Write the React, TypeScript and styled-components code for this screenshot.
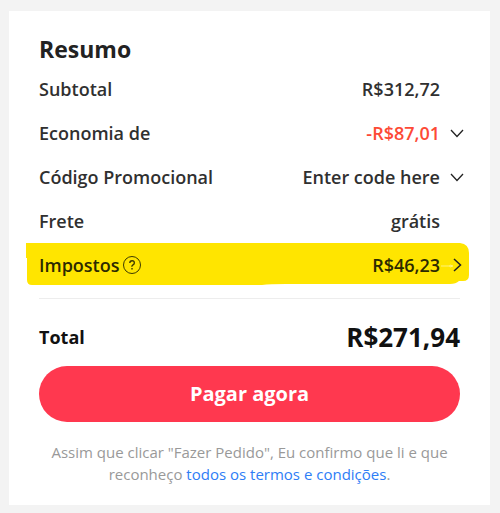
import React from "react";
import styled, { createGlobalStyle } from "styled-components";

const GlobalStyle = createGlobalStyle`
  *, *::before, *::after { box-sizing: border-box; }
  body {
    margin: 0;
    background: #f3f3f3;
    color: #222;
    font-family: "Open Sans", "Noto Sans", sans-serif;
  }
  button { font: inherit; color: inherit; }
`;

const Page = styled.main`
  padding: 11px 10px 8px 9px;
`;

const Card = styled.section`
  padding: 22px 30px 20px;
  background: #fff;
`;

const Title = styled.h1`
  margin: 0 0 2px;
  font-size: 23px;
  line-height: 32px;
  font-weight: 700;
`;

const Rows = styled.dl`
  margin: 0;
`;

const Row = styled.div<{ $marked?: boolean }>`
  position: relative;
  display: flex;
  align-items: center;
  height: 44px;
  color: ${(p) => (p.$marked ? "#2c2a00" : "#303030")};
  font-size: 18px;
  line-height: 24px;
  font-weight: 600;
`;

const Label = styled.dt`
  position: relative;
  display: flex;
  align-items: center;
  gap: 2px;
  flex: 1;
`;

const Value = styled.dd<{ $discount?: boolean }>`
  position: relative;
  display: flex;
  align-items: center;
  margin: 0;
  padding-right: 20px;
  color: ${(p) => (p.$discount ? "#fd4a36" : "inherit")};

  &:has(button) { padding-right: 0; }
`;

const IconButton = styled.button`
  display: flex;
  align-items: center;
  padding: 0;
  border: 0;
  background: none;
  color: #222;
  cursor: pointer;
`;

const Chevron = styled.svg`
  width: 20px;
  height: 20px;
  overflow: visible;
  fill: none;
  stroke: currentColor;
`;

const Help = styled.svg`
  width: 20px;
  height: 20px;
  fill: none;
  stroke: #3d3a00;
`;

const Marker = styled.svg`
  position: absolute;
  top: 0;
  left: -13px;
  width: calc(100% + 22px);
  height: 42px;
  fill: #ffe500;
`;

const Divider = styled.hr`
  height: 1px;
  margin: 11px 0 19px;
  border: 0;
  background: #ededed;
`;

const TotalRow = styled.div`
  display: flex;
  align-items: center;
  justify-content: space-between;
  height: 38px;
  font-size: 18px;
  font-weight: 700;
  color: #111;
`;

const TotalValue = styled.strong`
  font-size: 26px;
  line-height: 36px;
  font-weight: 700;
`;

const PayButton = styled.button`
  display: block;
  width: 100%;
  height: 56px;
  margin-top: 10px;
  padding: 0 0 2px;
  border: 0;
  border-radius: 28px;
  background: #ff384f;
  color: #fff;
  font-size: 20px;
  font-weight: 700;
  cursor: pointer;
`;

const Terms = styled.p`
  margin: 19px 0 0;
  color: #999;
  font-size: 15px;
  line-height: 22px;
  text-align: center;
`;

const TermsLink = styled.a`
  color: #2e7df6;
  text-decoration: none;
`;

function Toggle({ label, right }: { label: string; right?: boolean }) {
  return (
    <IconButton type="button" aria-label={label}>
      <Chevron viewBox="0 0 20 20" aria-hidden="true">
        {right ? (
          <path d="M14 4l6.5 6-6.5 6" strokeWidth="1.5" />
        ) : (
          <path d="M11 7l6 6.5L23 7" strokeWidth="1.3" />
        )}
      </Chevron>
    </IconButton>
  );
}

export default function App() {
  return (
    <>
      <GlobalStyle />
      <Page>
        <Card>
          <Title>Resumo</Title>
          <Rows>
            <Row>
              <Label>Subtotal</Label>
              <Value>R$312,72</Value>
            </Row>
            <Row>
              <Label>Economia de</Label>
              <Value $discount>
                -R$87,01
                <Toggle label="Ver economia" />
              </Value>
            </Row>
            <Row>
              <Label>Código Promocional</Label>
              <Value>
                Enter code here
                <Toggle label="Inserir código promocional" />
              </Value>
            </Row>
            <Row>
              <Label>Frete</Label>
              <Value>grátis</Value>
            </Row>
            <Row $marked>
              <Marker viewBox="0 0 443 42" preserveAspectRatio="none" aria-hidden="true">
                <path d="M0 0H434Q443 1 443 10V32Q443 38 437 38H433Q430 41 424 41H260Q244 41 236 42H6Q1 42 1 37V15H0Z" />
                <path d="M415 23h9v-1l3 1-3 1v-1" fill="none" stroke="#fff27a" />
              </Marker>
              <Label>
                Impostos
                <IconButton type="button" aria-label="Ajuda sobre impostos">
                  <Help viewBox="0 0 20 20" aria-hidden="true">
                    <circle cx="10" cy="10" r="8.5" />
                    <path d="M7.8 8.1Q7.8 5.8 10.1 5.8T12.3 7.9Q12.3 9.1 11 9.9T10 11.7M10 13v1.5" strokeWidth="1.4" />
                  </Help>
                </IconButton>
              </Label>
              <Value>
                R$46,23
                <Toggle label="Ver impostos" right />
              </Value>
            </Row>
          </Rows>
          <Divider />
          <TotalRow>
            <span>Total</span>
            <TotalValue>R$271,94</TotalValue>
          </TotalRow>
          <PayButton type="button">Pagar agora</PayButton>
          <Terms>
            Assim que clicar "Fazer Pedido", Eu confirmo que li e que reconheço{" "}
            <TermsLink href="#termos">todos os termos e condições</TermsLink>.
          </Terms>
        </Card>
      </Page>
    </>
  );
}
